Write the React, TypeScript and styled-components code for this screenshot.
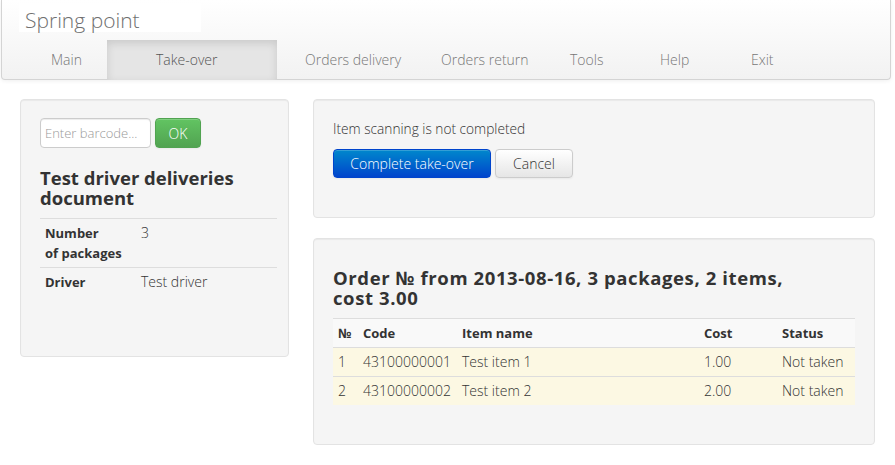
import React from "react";
import styled, { createGlobalStyle } from "styled-components";

const GlobalStyle = createGlobalStyle`
  body {
    margin: 0;
    background: #ffffff;
    font-family: "Open Sans", "Liberation Sans", sans-serif;
    font-size: 14px;
    line-height: 20px;
    color: #333333;
  }
`;

const Navbar = styled.header`
  width: 888px;
  height: 79px;
  margin-left: 1px;
  display: flex;
  flex-direction: column;
  background: linear-gradient(to bottom, #ffffff, #f2f2f2);
  border: 1px solid #d4d4d4;
  border-top: none;
  border-radius: 0 0 4px 4px;
  box-shadow: 0 1px 4px rgba(0, 0, 0, 0.065);
`;

const Brand = styled.div`
  width: 176px;
  height: 29px;
  margin: 3px 0 0 17px;
  padding-left: 6px;
  background: #ffffff;
  font-size: 21px;
  line-height: 34px;
  font-weight: 300;
  color: #6f6f6f;
`;

const Nav = styled.nav`
  display: flex;
  margin-top: 8px;
  padding-left: 19px;
  height: 40px;
`;

const NavItem = styled.a<{ $w?: number; $pl: number; $active?: boolean }>`
  display: block;
  width: ${(p) => (p.$w ? `${p.$w}px` : "auto")};
  box-sizing: border-box;
  padding-left: ${(p) => p.$pl}px;
  line-height: 40px;
  font-size: 14px;
  font-weight: 300;
  color: ${(p) => (p.$active ? "#555555" : "#777777")};
  background: ${(p) => (p.$active ? "#e5e5e5" : "transparent")};
  box-shadow: ${(p) => (p.$active ? "inset 0 3px 8px rgba(0, 0, 0, 0.125)" : "none")};
  text-decoration: none;
  white-space: nowrap;
`;

const Layout = styled.main`
  display: grid;
  grid-template-columns: 269px 562px;
  column-gap: 24px;
  align-items: start;
  padding: 19px 0 0 20px;
`;

const Column = styled.div`
  display: flex;
  flex-direction: column;
  gap: 20px;
`;

const Well = styled.section<{ $minH?: number }>`
  box-sizing: border-box;
  min-height: ${(p) => (p.$minH ? `${p.$minH}px` : "0")};
  padding: 19px;
  background: #f5f5f5;
  border: 1px solid #e3e3e3;
  border-radius: 4px;
  box-shadow: inset 0 1px 1px rgba(0, 0, 0, 0.05);
`;

const SearchForm = styled.form`
  display: flex;
  gap: 4px;
  margin: -1px 0 20px;
`;

const Input = styled.input`
  box-sizing: border-box;
  width: 111px;
  height: 30px;
  padding: 4px 4px;
  border: 1px solid #cccccc;
  border-radius: 4px;
  background: #ffffff;
  font-family: inherit;
  font-size: 13px;
  font-weight: 300;
  color: #555555;
  box-shadow: inset 0 1px 1px rgba(0, 0, 0, 0.075);
  &::placeholder {
    color: #999999;
  }
`;

const Button = styled.button<{ $variant?: "primary" | "success" | "default"; $w: number }>`
  box-sizing: border-box;
  width: ${(p) => p.$w}px;
  height: ${(p) => (p.$variant === "success" ? 30 : 29)}px;
  padding: 0;
  border-radius: 4px;
  font-family: inherit;
  font-size: 14px;
  font-weight: 300;
  cursor: pointer;
  border: 1px solid
    ${(p) =>
      p.$variant === "primary"
        ? "#0044cc"
        : p.$variant === "success"
        ? "#51a351"
        : "#cccccc"};
  color: ${(p) => (p.$variant === "default" || !p.$variant ? "#333333" : "#ffffff")};
  background: ${(p) =>
    p.$variant === "primary"
      ? "linear-gradient(to bottom, #0088cc, #0044cc)"
      : p.$variant === "success"
      ? "linear-gradient(to bottom, #62c462, #51a351)"
      : "linear-gradient(to bottom, #ffffff, #e6e6e6)"};
  box-shadow: inset 0 1px 0 rgba(255, 255, 255, 0.2), 0 1px 2px rgba(0, 0, 0, 0.05);
`;

const Heading = styled.h3<{ $maxW?: number; $spacing?: number }>`
  max-width: ${(p) => (p.$maxW ? `${p.$maxW}px` : "none")};
  margin: 10px 0;
  font-size: 18.5px;
  line-height: 20px;
  font-weight: 700;
  letter-spacing: ${(p) => p.$spacing ?? 0}px;
  color: #333333;
`;

const Message = styled.p`
  margin: 0 0 10px;
  font-size: 13.7px;
  font-weight: 300;
`;

const ButtonRow = styled.div`
  display: flex;
  gap: 4px;
  margin-bottom: 20px;
`;

const Table = styled.table<{ $w?: number }>`
  width: ${(p) => (p.$w ? `${p.$w}px` : "100%")};
  border-collapse: collapse;
  margin-bottom: 20px;
`;

const Th = styled.th<{ $w?: number }>`
  width: ${(p) => (p.$w ? `${p.$w}px` : "auto")};
  padding: 4px 5px;
  text-align: left;
  vertical-align: top;
  font-size: 13px;
  font-weight: 700;
  border-top: 1px solid #dddddd;
`;

const Td = styled.td`
  padding: 4px 5px;
  text-align: left;
  vertical-align: top;
  font-weight: 300;
  border-top: 1px solid #dddddd;
`;

const HeadRow = styled.tr`
  background: #f9f9f9;
`;

const ItemRow = styled.tr`
  background: #fcf8e3;
`;

const navItems = [
  { label: "Main", w: 86, pl: 30 },
  { label: "Take-over", w: 170, pl: 49, active: true },
  { label: "Orders delivery", w: 136, pl: 28 },
  { label: "Orders return", w: 129, pl: 28 },
  { label: "Tools", w: 90, pl: 28 },
  { label: "Help", w: 91, pl: 28 },
  { label: "Exit", pl: 28 },
];

const items = [
  { n: 1, code: "43100000001", name: "Test item 1", cost: "1.00", status: "Not taken" },
  { n: 2, code: "43100000002", name: "Test item 2", cost: "2.00", status: "Not taken" },
];

export default function App() {
  return (
    <>
      <GlobalStyle />
      <Navbar>
        <Brand>Spring point</Brand>
        <Nav>
          {navItems.map((item) => (
            <NavItem key={item.label} $w={item.w} $pl={item.pl} $active={item.active}>
              {item.label}
            </NavItem>
          ))}
        </Nav>
      </Navbar>
      <Layout>
        <Well $minH={258}>
          <SearchForm onSubmit={(e) => e.preventDefault()}>
            <Input placeholder="Enter barcode..." />
            <Button type="submit" $variant="success" $w={46}>
              OK
            </Button>
          </SearchForm>
          <Heading>Test driver deliveries document</Heading>
          <Table $w={237}>
            <tbody>
              <tr>
                <Th $w={86}>
                  Number
                  <br />
                  of packages
                </Th>
                <Td>3</Td>
              </tr>
              <tr>
                <Th>Driver</Th>
                <Td>Test driver</Td>
              </tr>
            </tbody>
          </Table>
        </Well>
        <Column>
          <Well>
            <Message>Item scanning is not completed</Message>
            <ButtonRow>
              <Button $variant="primary" $w={158}>
                Complete take-over
              </Button>
              <Button $w={78}>Cancel</Button>
            </ButtonRow>
          </Well>
          <Well>
            <Heading $maxW={470} $spacing={0.6}>
              Order № from 2013-08-16, 3 packages, 2 items, cost 3.00
            </Heading>
            <Table>
              <thead>
                <HeadRow>
                  <Th $w={15}>№</Th>
                  <Th $w={89}>Code</Th>
                  <Th $w={232}>Item name</Th>
                  <Th $w={68}>Cost</Th>
                  <Th>Status</Th>
                </HeadRow>
              </thead>
              <tbody>
                {items.map((it) => (
                  <ItemRow key={it.n}>
                    <Td>{it.n}</Td>
                    <Td>{it.code}</Td>
                    <Td>{it.name}</Td>
                    <Td>{it.cost}</Td>
                    <Td>{it.status}</Td>
                  </ItemRow>
                ))}
              </tbody>
            </Table>
          </Well>
        </Column>
      </Layout>
    </>
  );
}
